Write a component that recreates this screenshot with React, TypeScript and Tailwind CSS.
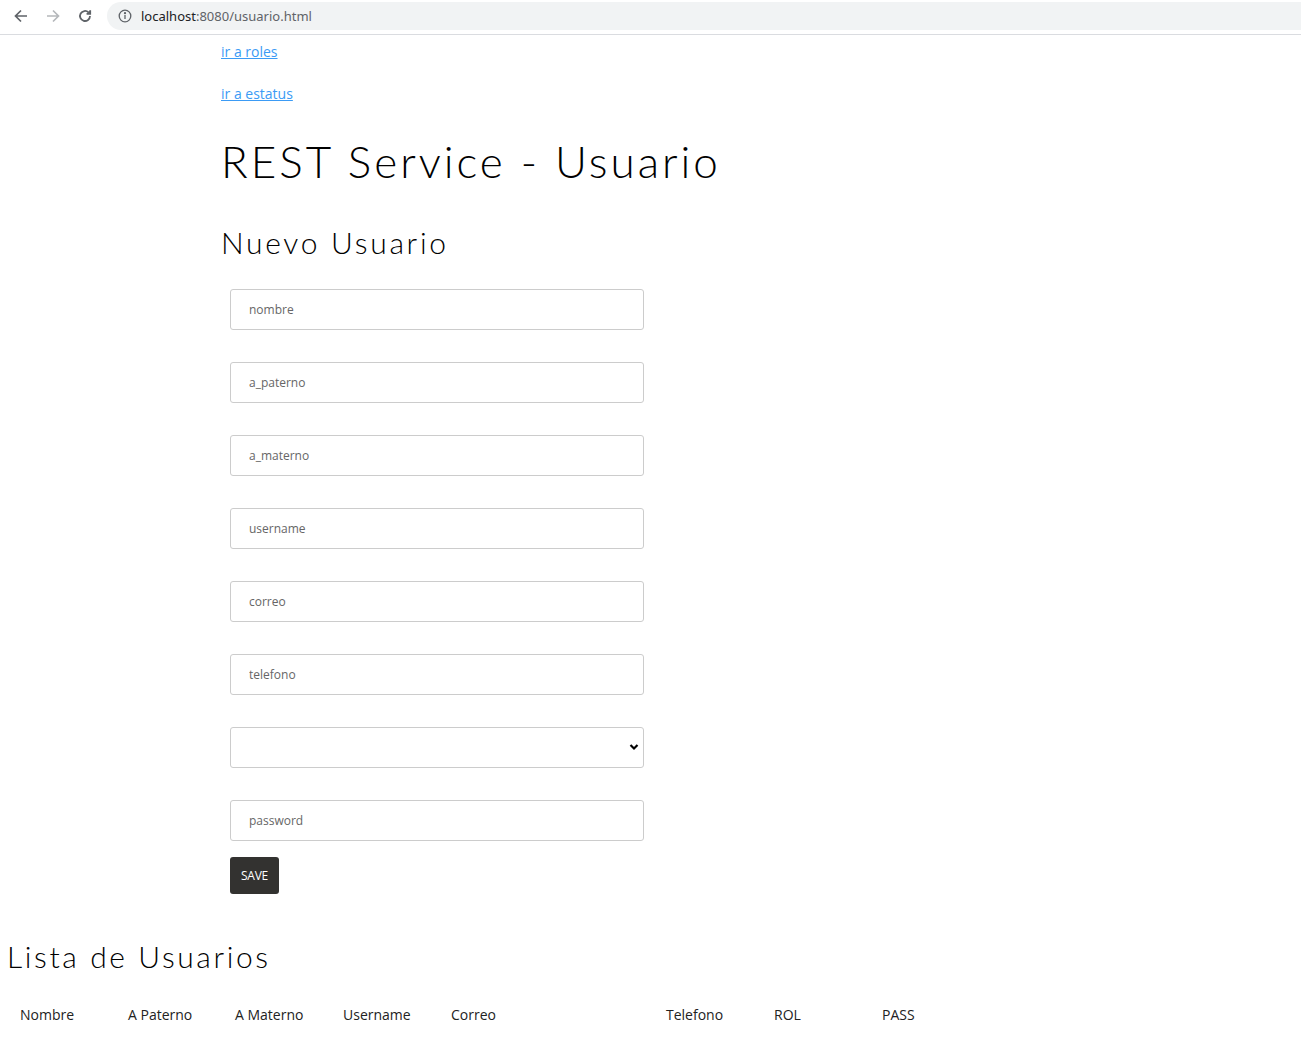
import React from 'react';

const fields = ['nombre', 'a_paterno', 'a_materno', 'username', 'correo', 'telefono'];

const columns: { label: string; w: string }[] = [
    { label: 'Nombre', w: 'w-[108px]' },
    { label: 'A Paterno', w: 'w-[107px]' },
    { label: 'A Materno', w: 'w-[108px]' },
    { label: 'Username', w: 'w-[108px]' },
    { label: 'Correo', w: 'w-[215px]' },
    { label: 'Telefono', w: 'w-[108px]' },
    { label: 'ROL', w: 'w-[108px]' },
    { label: 'PASS', w: 'w-[108px]' },
];

const BrowserBar = () => (
    <div className="flex h-[35px] items-start border-b border-[#dadce0] bg-white">
        <div className="flex h-[31px] w-[107px] items-center">
            <svg className="ml-[13px]" width="16" height="16" viewBox="0 0 16 16" fill="none" stroke="#5f6368" strokeWidth="1.7">
                <path d="M14 8H2.5M8 2.5L2.5 8 8 13.5" />
            </svg>
            <svg className="ml-[16px]" width="16" height="16" viewBox="0 0 16 16" fill="none" stroke="#b5b8bb" strokeWidth="1.7">
                <path d="M2 8h11.5M8 2.5L13.5 8 8 13.5" />
            </svg>
            <svg className="ml-[16px]" width="16" height="16" viewBox="0 0 16 16" fill="none" stroke="#5f6368" strokeWidth="1.8">
                <path d="M13 8a5 5 0 1 1-1.5-3.6" />
                <path d="M13.2 2.2v3.6H9.6" fill="#5f6368" />
            </svg>
        </div>
        <div className="mt-[2px] flex h-[28px] flex-1 items-center rounded-l-full bg-[#f1f3f4] pl-[11px]">
            <svg width="14" height="14" viewBox="0 0 14 14" fill="none" stroke="#5f6368" strokeWidth="1.3">
                <circle cx="7" cy="7" r="5.8" />
                <path d="M7 6v4" />
                <circle cx="7" cy="4.2" r="0.5" fill="#5f6368" />
            </svg>
            <span className="ml-[9px] text-[13px] leading-[20px] text-[#202124]" style={{ fontFamily: '"Segoe UI", "Noto Sans", sans-serif' }}>
                localhost<span className="text-[#5f6368]">:8080/usuario.html</span>
            </span>
        </div>
    </div>
);

const App = () => {
    return (
        <div className="min-h-[1041px] bg-white" style={{ fontFamily: '"Open Sans", sans-serif' }}>
            <BrowserBar />

            <div className="pl-[221px]">
                <div className="flex flex-col gap-[22px] pt-[7px] text-[14px] leading-[20px]">
                    <a href="#" className="text-[#3b9bf5] underline">ir a roles</a>
                    <a href="#" className="text-[#3b9bf5] underline">ir a estatus</a>
                </div>

                <h1 className="mt-[27px] text-[44px] leading-[60px] font-light tracking-[3px] text-black" style={{ fontFamily: 'Lato, sans-serif' }}>
                    REST Service - Usuario
                </h1>
                <h2 className="mt-[30px] text-[30px] leading-[42px] font-light tracking-[2.7px] text-black" style={{ fontFamily: 'Lato, sans-serif' }}>
                    Nuevo Usuario
                </h2>

                <form className="ml-[9px] mt-[26px] flex w-[414px] flex-col gap-[32px]">
                    {fields.map((f) => (
                        <input
                            key={f}
                            type="text"
                            placeholder={f}
                            className="h-[41px] rounded-[3px] border border-[#cccccc] px-[18px] text-[12px] text-[#555] placeholder:text-[#666]"
                        />
                    ))}
                    <div className="relative">
                        <select className="h-[41px] w-full appearance-none rounded-[3px] border border-[#cccccc] bg-white px-[18px] text-[12px]" />
                        <svg className="pointer-events-none absolute right-[5px] top-[16px]" width="10" height="8" viewBox="0 0 10 8" fill="none" stroke="#000" strokeWidth="2.2">
                            <path d="M1.5 2L5 5.5 8.5 2" />
                        </svg>
                    </div>
                    <div className="flex flex-col gap-[16px]">
                        <input
                            type="password"
                            placeholder="password"
                            className="h-[41px] rounded-[3px] border border-[#cccccc] px-[18px] text-[12px] text-[#555] placeholder:text-[#666]"
                        />
                        <button type="button" className="h-[37px] w-[49px] rounded-[3px] bg-[#333230] text-[12px] tracking-[-0.3px] text-white">
                            SAVE
                        </button>
                    </div>
                </form>
            </div>

            <h2 className="ml-[7px] mt-[41px] text-[30px] leading-[42px] font-light tracking-[2.6px] text-black" style={{ fontFamily: 'Lato, sans-serif' }}>
                Lista de Usuarios
            </h2>

            <div className="ml-[8px] mt-[28px] flex text-[14px] leading-[20px] text-[#222]">
                {columns.map((c) => (
                    <div key={c.label} className={`${c.w} px-[12px]`}>{c.label}</div>
                ))}
            </div>
        </div>
    );
};

export default App;
